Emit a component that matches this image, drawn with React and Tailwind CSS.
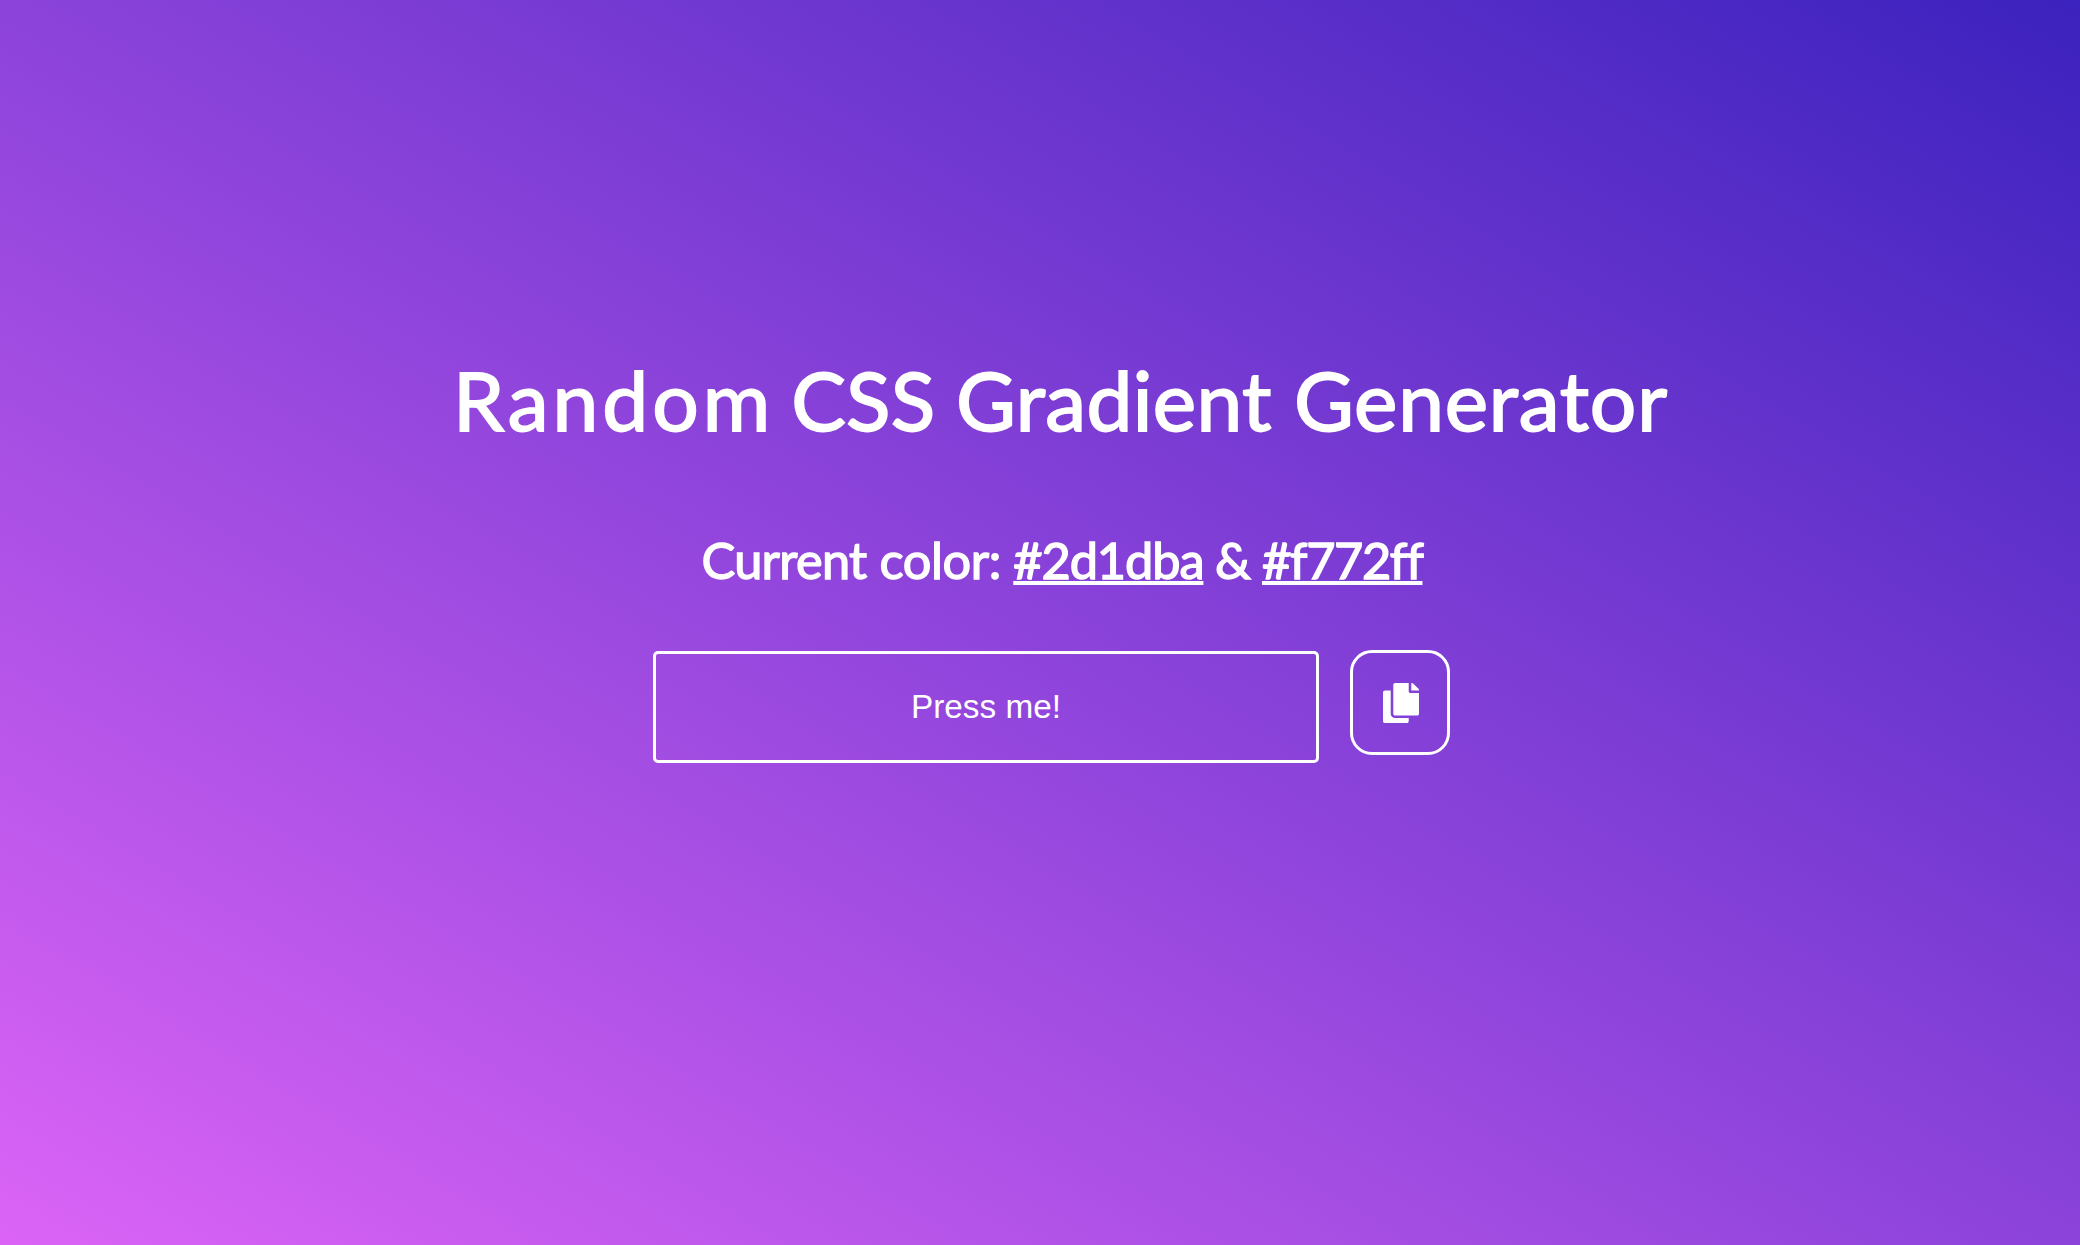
import { FaCopy } from "react-icons/fa";

function Title() {
  return (
    <h1 className="flex h-[98px] whitespace-pre pl-[453px] text-[82px] leading-[98px] [-webkit-text-stroke:1.8px_white] [stroke-linejoin:round]">
      <span className="tracking-[4px]">Random</span>
      <span className="ml-[17px] tracking-[0.2px]">CSS</span>
      <span className="ml-[20.5px] tracking-[0.4px]">Gradient</span>
      <span className="ml-[22px] tracking-[0.8px]">Generator</span>
    </h1>
  );
}

function CurrentColors() {
  return (
    <h2 className="mt-[81px] flex h-[61px] pl-[701.5px] text-[50.5px] leading-[61px] [-webkit-text-stroke:1.4px_white] [font-variant-ligatures:none] [stroke-linejoin:round]">
      <span className="w-[164px] tracking-[-0.7px]">Current</span>
      <span className="ml-[14px] w-[124px] tracking-[-0.4px]">color:</span>
      <span className="ml-[9.8px] w-[189.7px] tracking-[-1.1px] underline decoration-[4px] underline-offset-[2px] [text-decoration-skip-ink:none]">
        #2d1dba
      </span>
      <span className="ml-[12px] w-[36px]">&amp;</span>
      <span className="ml-[11px] tracking-[-1.4px] underline decoration-[4px] underline-offset-[2px] [text-decoration-skip-ink:none]">
        #f772ff
      </span>
    </h2>
  );
}

export default function App() {
  return (
    <main className="h-[1245px] w-full overflow-hidden bg-[linear-gradient(to_top_right,#db64f6,#3c22be)] pt-[350px] font-[Lato,sans-serif] text-white">
      <Title />
      <CurrentColors />
      <div className="mt-[60px] flex items-start pl-[653px]">
        <button className="mt-px h-[112px] w-[666px] rounded-[5px] border-3 border-white font-['Liberation_Sans',Arial,sans-serif] text-[33.33px]">
          Press me!
        </button>
        <button
          aria-label="Copy gradient"
          className="ml-[31px] flex h-[105px] w-[100px] items-center justify-center rounded-[22px] border-3 border-white"
        >
          <FaCopy className="ml-px h-10 w-9" preserveAspectRatio="none" />
        </button>
      </div>
    </main>
  );
}
